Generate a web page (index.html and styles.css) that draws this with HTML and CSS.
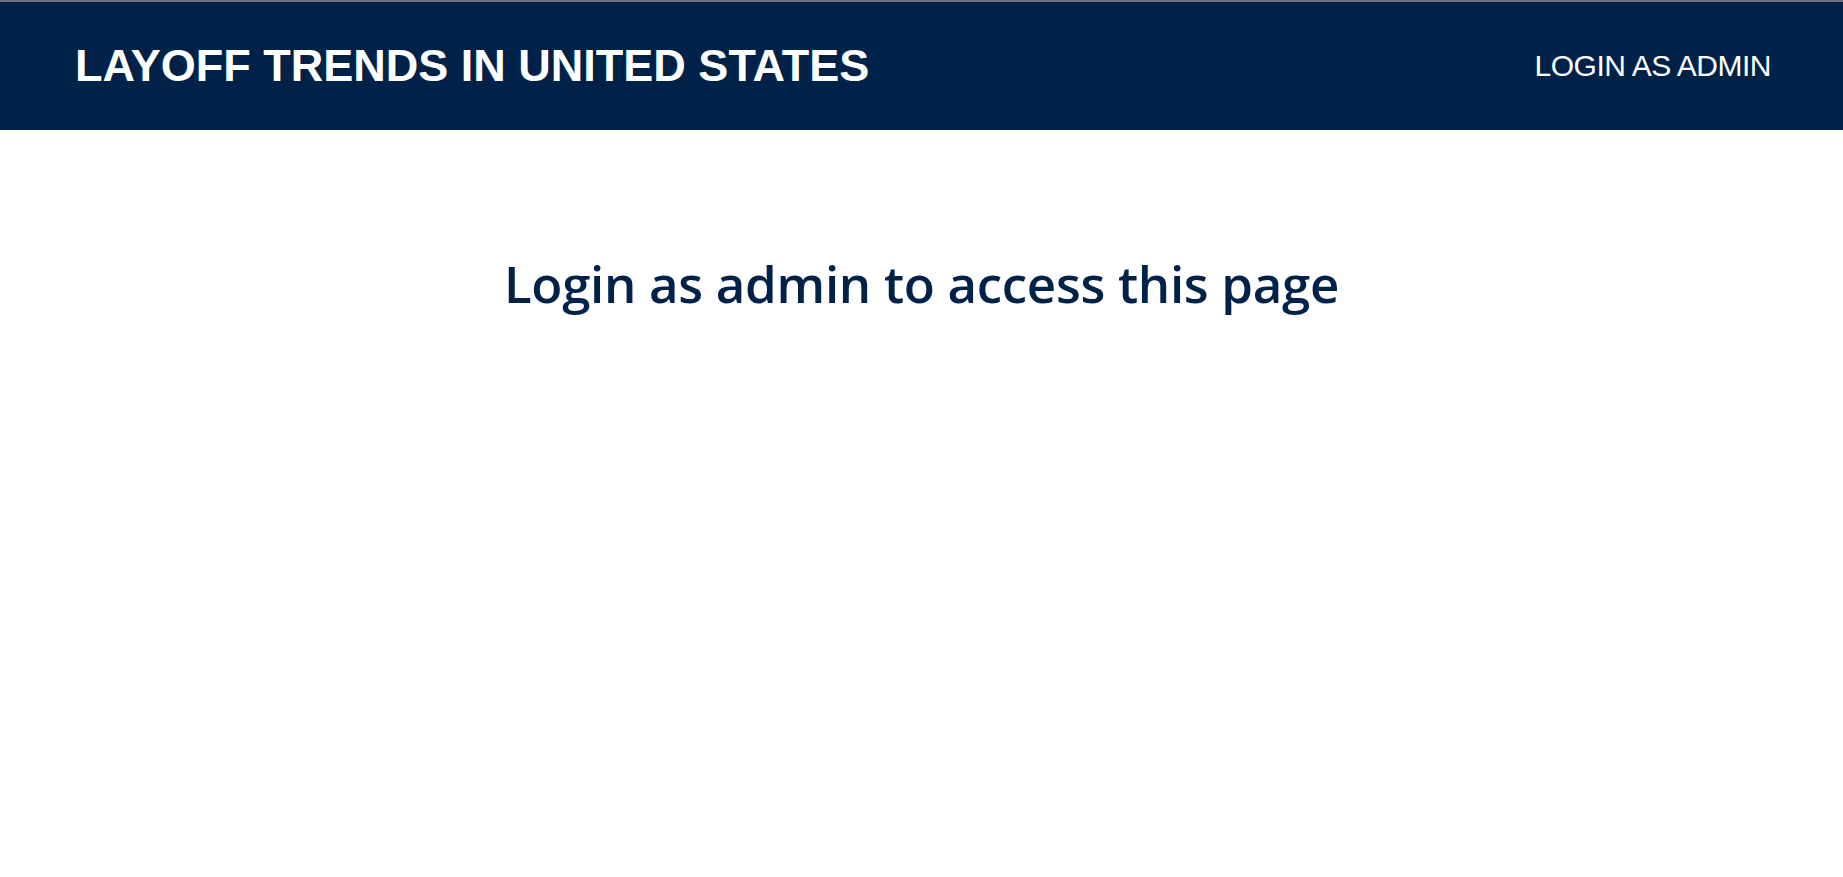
FILE: index.html
```html
<!DOCTYPE html>
<html>
<head>
<meta charset="utf-8">
<link rel="stylesheet" href="styles.css">
</head>
<body>
<header class="topbar">
  <h1 class="brand">LAYOFF TRENDS IN UNITED STATES</h1>
  <a class="login-link" href="#">LOGIN AS ADMIN</a>
</header>
<main class="content">
  <h2 class="notice">Login as admin to access this page</h2>
</main>
</body>
</html>
```
FILE: styles.css
```css
html, body {
  margin: 0;
  padding: 0;
  background: #ffffff;
}
body {
  border-top: 2px solid #6b7384;
  font-family: "Liberation Sans", Arial, sans-serif;
}
.topbar {
  height: 128px;
  background: #002249;
  display: flex;
  align-items: center;
  justify-content: space-between;
  padding: 0 72px 0 75px;
}
.brand {
  margin: 0;
  color: #ffffff;
  font-family: "Liberation Sans", Arial, sans-serif;
  font-weight: bold;
  font-size: 45px;
  letter-spacing: 0;
}
.login-link {
  color: #ffffff;
  text-decoration: none;
  font-size: 30px;
  letter-spacing: -0.5px;
}
.content {
  display: flex;
  justify-content: center;
  padding-top: 118px;
}
.notice {
  margin: 0;
  color: #002249;
  font-family: "Open Sans", "Noto Sans", sans-serif;
  font-weight: 600;
  font-size: 51px;
  letter-spacing: -0.3px;
}
```
